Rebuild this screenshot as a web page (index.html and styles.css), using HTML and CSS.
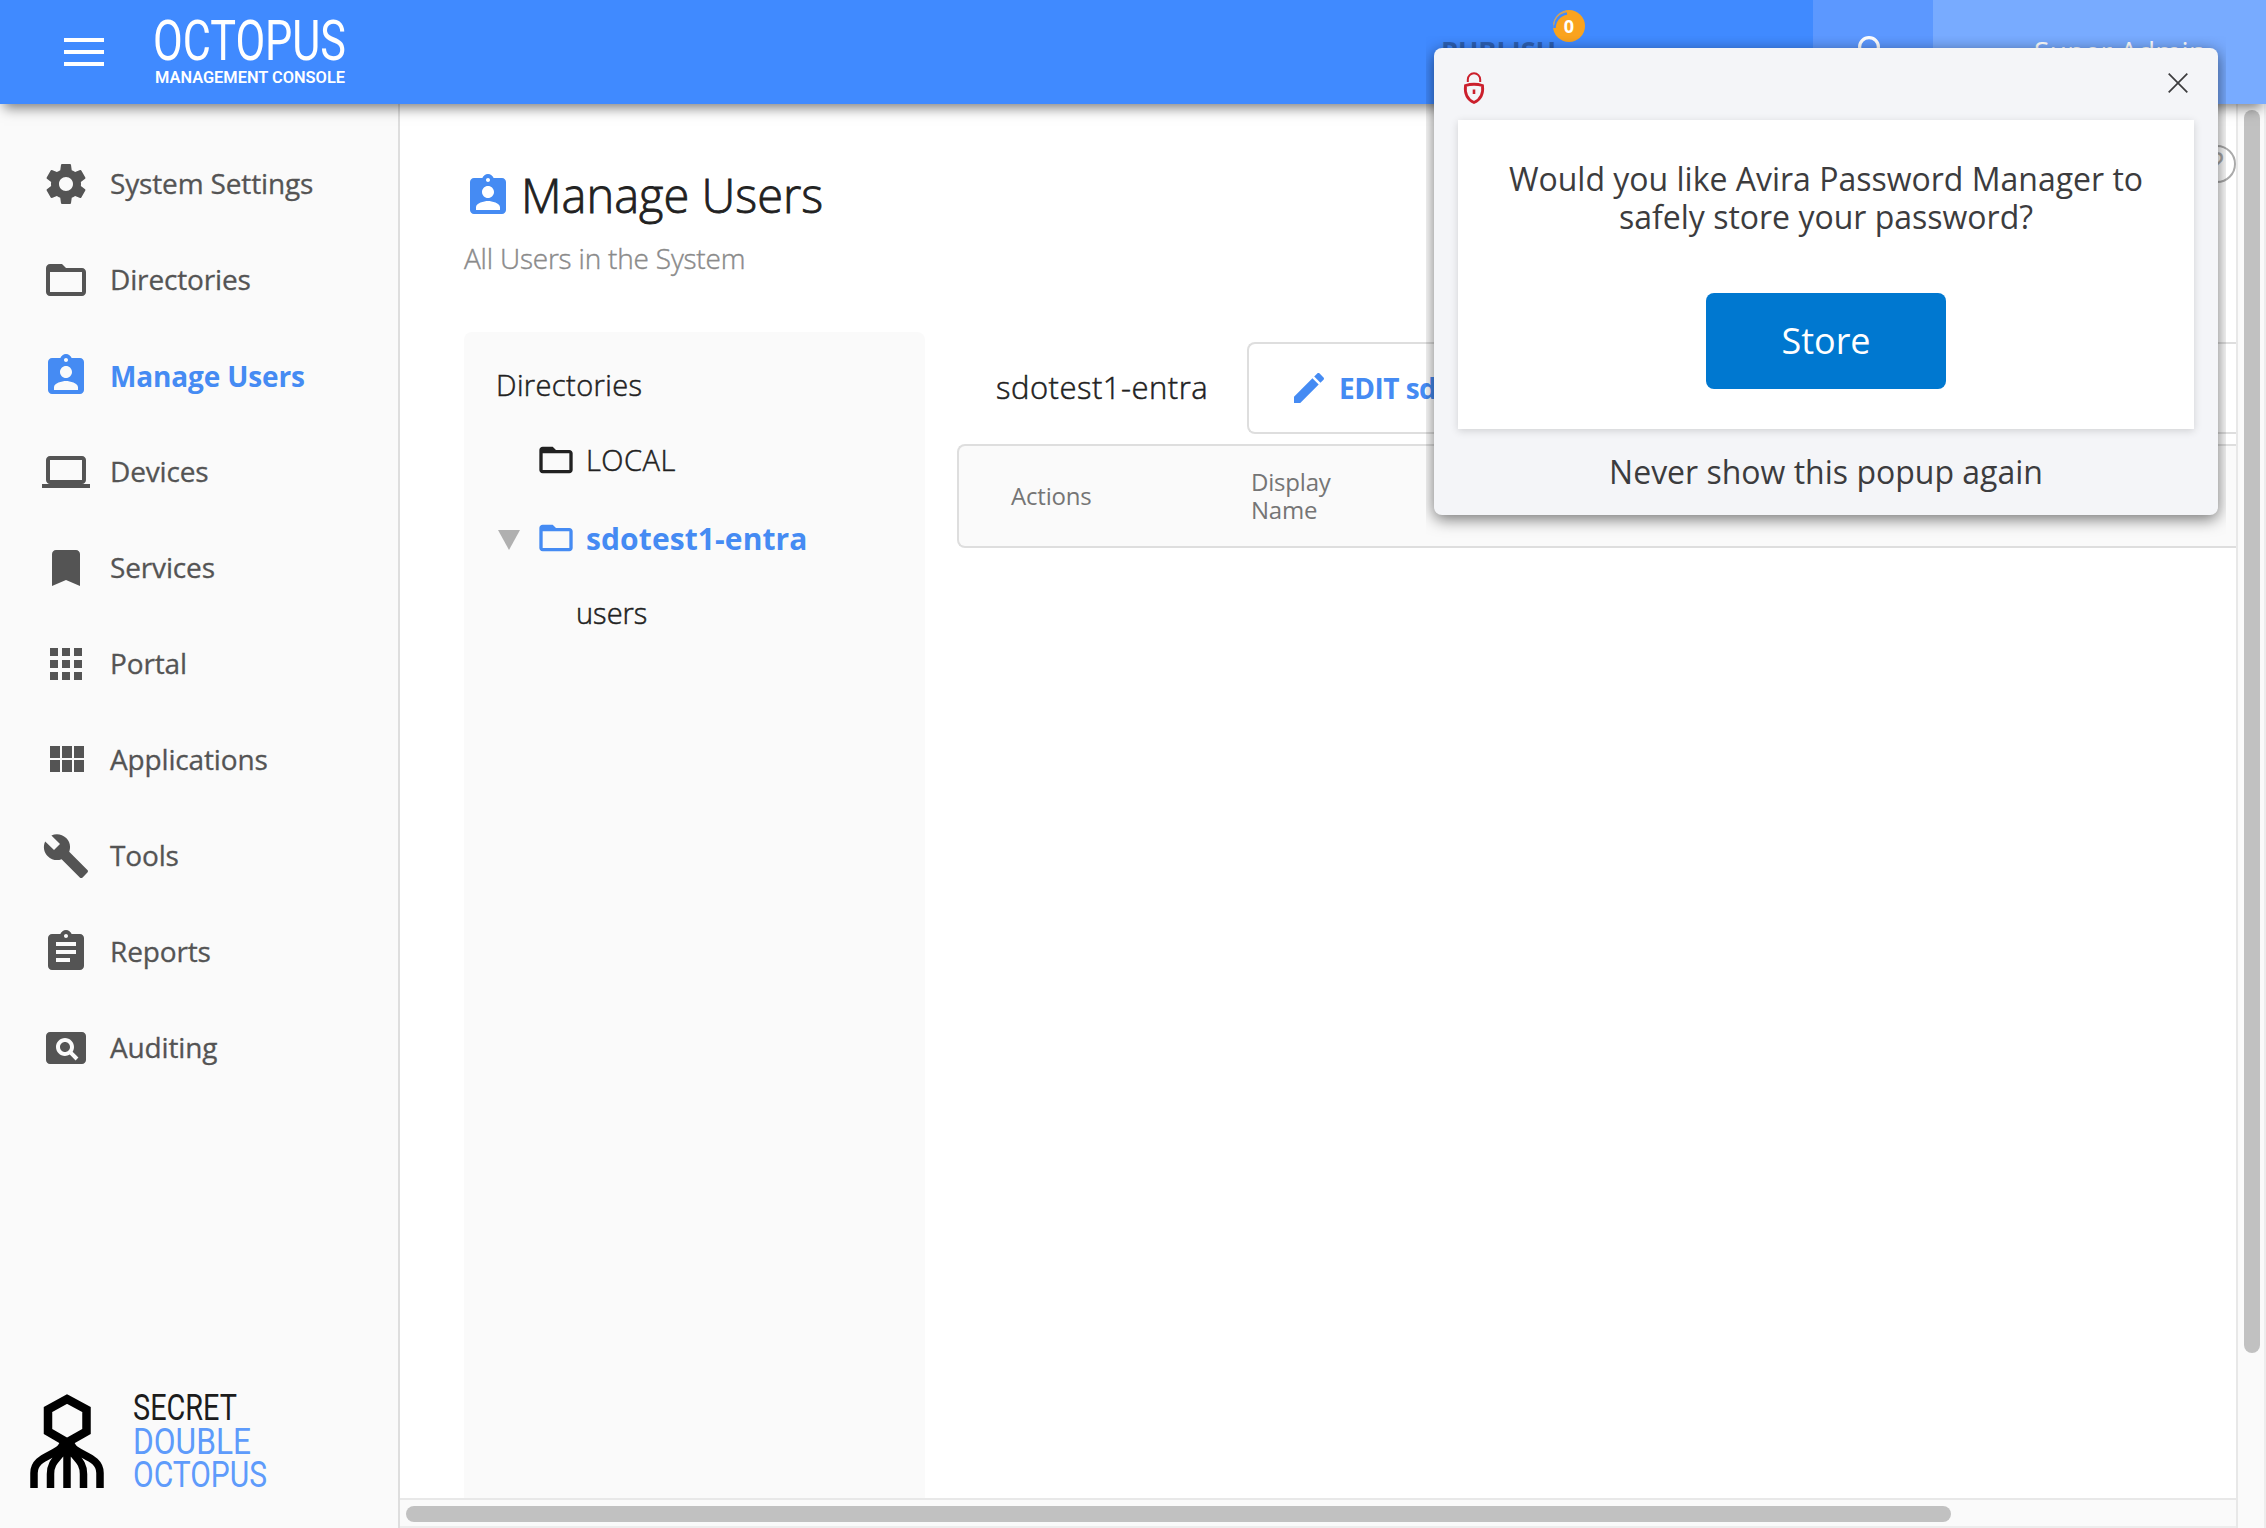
FILE: index.html
```html
<!DOCTYPE html>
<html lang="en">
<head>
    <meta charset="UTF-8">
    <meta name="viewport" content="width=device-width, initial-scale=1.0">
    <title>Octopus Management Console</title>
    <link rel="stylesheet" href="styles.css">
</head>
<body>
    <!-- Top bar -->
    <header class="topbar">
        <button class="menu-btn" aria-label="Menu"><span></span><span></span><span></span></button>
        <svg class="brand" width="190" height="72" viewBox="0 0 190 72">
            <text class="brand-name" x="-2" y="44" textLength="193" lengthAdjust="spacingAndGlyphs">OCTOPUS</text>
            <text class="brand-sub" x="0" y="66.500" textLength="190" lengthAdjust="spacingAndGlyphs">MANAGEMENT CONSOLE</text>
        </svg>
        <div class="publish">
            <span class="publish-label">PUBLISH</span>
            <span class="badge">0
                <svg class="badge-arc" viewBox="0 0 32 32"><path d="M1.5 18A14.5 14.5 0 0 1 14 3.5" fill="none" stroke="#408aff" stroke-width="2.6"/><path d="M.8 15A15 15 0 0 1 13 1.2" fill="none" stroke="#b3a184" stroke-width="1"/></svg>
            </span>
        </div>
        <div class="top-search">
            <svg width="48" height="48" viewBox="0 0 24 24"><circle cx="12" cy="8" r="4.7" fill="none" stroke="#fff" stroke-width="1.6"/><path d="M4 20c0-4 4-6 8-6s8 2 8 6z" fill="#fff"/></svg>
        </div>
        <div class="top-user">Super Admin</div>
    </header>

    <div class="layout">
        <!-- Sidebar -->
        <aside class="sidebar">
            <nav class="nav">
                <a class="nav-item">
                    <svg class="icon" viewBox="0 0 24 24"><path d="M19.43 12.98c.04-.32.07-.64.07-.98s-.03-.66-.07-.98l2.11-1.65c.19-.15.24-.42.12-.64l-2-3.46c-.12-.22-.39-.3-.61-.22l-2.49 1c-.52-.4-1.08-.73-1.69-.98l-.38-2.65C14.46 2.18 14.25 2 14 2h-4c-.25 0-.46.18-.49.42l-.38 2.65c-.61.25-1.17.59-1.69.98l-2.49-1c-.23-.09-.49 0-.61.22l-2 3.46c-.13.22-.07.49.12.64l2.11 1.65c-.04.32-.07.65-.07.98s.03.66.07.98l-2.11 1.65c-.19.15-.24.42-.12.64l2 3.46c.12.22.39.3.61.22l2.49-1c.52.4 1.08.73 1.69.98l.38 2.65c.03.24.24.42.49.42h4c.25 0 .46-.18.49-.42l.38-2.65c.61-.25 1.17-.59 1.69-.98l2.49 1c.23.09.49 0 .61-.22l2-3.46c.12-.22.07-.49-.12-.64l-2.11-1.65zM12 15.5c-1.93 0-3.5-1.57-3.5-3.5s1.57-3.5 3.5-3.5 3.5 1.57 3.5 3.5-1.57 3.5-3.5 3.5z"/></svg>
                    <span>System Settings</span>
                </a>
                <a class="nav-item">
                    <svg class="icon" viewBox="0 0 24 24"><path d="M20 6h-8l-2-2H4c-1.1 0-1.99.9-1.99 2L2 18c0 1.1.9 2 2 2h16c1.1 0 2-.9 2-2V8c0-1.1-.9-2-2-2zm0 12H4V8h16v10z"/></svg>
                    <span>Directories</span>
                </a>
                <a class="nav-item active">
                    <svg class="icon" viewBox="0 0 24 24"><path d="M19 3h-4.18C14.4 1.84 13.3 1 12 1c-1.3 0-2.4.84-2.82 2H5c-1.1 0-2 .9-2 2v14c0 1.1.9 2 2 2h14c1.1 0 2-.9 2-2V5c0-1.1-.9-2-2-2zm-7 0c.55 0 1 .45 1 1s-.45 1-1 1-1-.45-1-1 .45-1 1-1zm0 4c1.66 0 3 1.34 3 3s-1.34 3-3 3-3-1.34-3-3 1.34-3 3-3zm6 12H6v-1.4c0-2 4-3.1 6-3.1s6 1.1 6 3.1V19z"/></svg>
                    <span>Manage Users</span>
                </a>
                <a class="nav-item">
                    <svg class="icon" viewBox="0 0 24 24"><path d="M20 18c1.1 0 1.99-.9 1.99-2L22 6c0-1.1-.9-2-2-2H4c-1.1 0-2 .9-2 2v10c0 1.1.9 2 2 2H0v2h24v-2h-4zM4 6h16v10H4V6z"/></svg>
                    <span>Devices</span>
                </a>
                <a class="nav-item">
                    <svg class="icon" viewBox="0 0 24 24"><path d="M17 3H7c-1.1 0-1.99.9-1.99 2L5 21l7-3 7 3V5c0-1.1-.9-2-2-2z"/></svg>
                    <span>Services</span>
                </a>
                <a class="nav-item">
                    <svg class="icon" viewBox="0 0 24 24"><path d="M4 8h4V4H4v4zm6 12h4v-4h-4v4zm-6 0h4v-4H4v4zm0-6h4v-4H4v4zm6 0h4v-4h-4v4zm6-10v4h4V4h-4zm-6 4h4V4h-4v4zm6 6h4v-4h-4v4zm0 6h4v-4h-4v4z"/></svg>
                    <span>Portal</span>
                </a>
                <a class="nav-item">
                    <svg class="icon" viewBox="0 0 24 24"><path d="M4 11h5V5H4v6zm0 7h5v-6H4v6zm6 0h5v-6h-5v6zm6 0h5v-6h-5v6zm-6-7h5V5h-5v6zm6-6v6h5V5h-5z"/></svg>
                    <span>Applications</span>
                </a>
                <a class="nav-item">
                    <svg class="icon" viewBox="0 0 24 24"><path d="M22.7 19l-9.1-9.1c.9-2.3.4-5-1.5-6.9-2-2-5-2.4-7.4-1.3L9 6 6 9 1.6 4.7C.4 7.1.9 10.1 2.9 12.1c1.9 1.9 4.6 2.4 6.9 1.5l9.1 9.1c.4.4 1 .4 1.4 0l2.3-2.3c.5-.4.5-1.1.1-1.4z"/></svg>
                    <span>Tools</span>
                </a>
                <a class="nav-item">
                    <svg class="icon" viewBox="0 0 24 24"><path d="M19 3h-4.18C14.4 1.84 13.3 1 12 1c-1.3 0-2.4.84-2.82 2H5c-1.1 0-2 .9-2 2v14c0 1.1.9 2 2 2h14c1.1 0 2-.9 2-2V5c0-1.1-.9-2-2-2zm-7 0c.55 0 1 .45 1 1s-.45 1-1 1-1-.45-1-1 .45-1 1-1zm2 14H7v-2h7v2zm3-4H7v-2h10v2zm0-4H7V7h10v2z"/></svg>
                    <span>Reports</span>
                </a>
                <a class="nav-item">
                    <svg class="icon" viewBox="0 0 24 24"><path d="M11.5 9C10.12 9 9 10.12 9 11.5s1.12 2.5 2.5 2.5 2.5-1.12 2.5-2.5S12.88 9 11.5 9zM20 4H4c-1.1 0-2 .9-2 2v12c0 1.1.9 2 2 2h16c1.1 0 2-.9 2-2V6c0-1.1-.9-2-2-2zm-3.21 14.21l-2.91-2.91c-.69.44-1.51.7-2.39.7C9.01 16 7 13.99 7 11.5S9.01 7 11.5 7 16 9.01 16 11.5c0 .88-.26 1.69-.7 2.39l2.91 2.9-1.42 1.42z"/></svg>
                    <span>Auditing</span>
                </a>
            </nav>
            <div class="company">
                <svg class="company-logo" width="74" height="94" viewBox="0 0 74 94" fill="none" stroke="#000" stroke-width="8.500">
                    <path d="M37 5L56.500 15.500V37.500L37 48.500L18 37.500V15.500z"/>
                    <path d="M37 50V94M33 52C24 62 4 63 4 79V94M35 54C28 65 20.500 67 20.500 80V94M41 52C50 62 70 63 70 79V94M39 54C46 65 53.500 67 53.500 80V94" stroke-width="7.500"/>
                    <path d="M30 48h14l5 8-4 6H29l-4-6z" fill="#000" stroke="none"/>
                </svg>
                <svg class="company-name" width="134" height="96" viewBox="0 0 134 96">
                    <text x="0" y="26" textLength="104" lengthAdjust="spacingAndGlyphs" fill="#1c1c1c">SECRET</text>
                    <text x="0" y="59.500" textLength="118" lengthAdjust="spacingAndGlyphs">DOUBLE</text>
                    <text x="0" y="92.500" textLength="134" lengthAdjust="spacingAndGlyphs">OCTOPUS</text>
                </svg>
            </div>
        </aside>

        <!-- Page content -->
        <main class="content">
            <div class="viewport">
                <div class="page-head">
                    <div>
                        <h1 class="page-title">
                            <svg class="icon" viewBox="0 0 24 24"><path d="M19 3h-4.180C14.4 1.84 13.3 1 12 1c-1.3 0-2.4.84-2.82 2H5c-1.1 0-2 .9-2 2v14c0 1.1.9 2 2 2h14c1.1 0 2-.9 2-2V5c0-1.1-.9-2-2-2zm-7 0c.55 0 1 .45 1 1s-.45 1-1 1-1-.45-1-1 .45-1 1-1zm0 4c1.66 0 3 1.34 3 3s-1.34 3-3 3-3-1.34-3-3 1.34-3 3-3zm6 12H6v-1.4c0-2 4-3.1 6-3.1s6 1.1 6 3.1V19z"/></svg>
                            <span>Manage Users</span>
                        </h1>
                        <p class="page-subtitle">All Users in the System</p>
                    </div>
                    <div class="help">?</div>
                </div>

                <div class="columns">
                    <section class="tree">
                        <h2 class="tree-title">Directories</h2>
                        <div class="tree-row">
                            <svg class="icon" viewBox="0 0 24 24"><path d="M20 6h-8l-2-2H4c-1.1 0-1.99.9-1.99 2L2 18c0 1.1.9 2 2 2h16c1.1 0 2-.9 2-2V8c0-1.1-.9-2-2-2zm0 12H4V8h16v10z"/></svg>
                            <span>LOCAL</span>
                        </div>
                        <div class="tree-row selected">
                            <span class="caret"></span>
                            <svg class="icon" viewBox="0 0 24 24"><path d="M20 6h-8l-2-2H4c-1.1 0-1.99.9-1.99 2L2 18c0 1.1.9 2 2 2h16c1.1 0 2-.9 2-2V8c0-1.1-.9-2-2-2zm0 12H4V8h16v10z"/></svg>
                            <span>sdotest1-entra</span>
                        </div>
                        <div class="tree-row child"><span>users</span></div>
                    </section>

                    <section class="users">
                        <div class="toolbar">
                            <span class="toolbar-title">sdotest1-entra</span>
                            <button class="edit-btn">
                                <svg class="icon" viewBox="0 0 24 24"><path d="M3 17.250V21h3.750L17.810 9.940l-3.750-3.750L3 17.250zM20.710 7.040c.39-.39.39-1.020 0-1.410l-2.340-2.340c-.39-.39-1.020-.39-1.410 0l-1.830 1.830 3.750 3.750 1.830-1.830z"/></svg>
                                <span>EDIT sdotest1-entra</span>
                            </button>
                        </div>
                        <div class="table-head">
                            <span class="col-actions">Actions</span>
                            <span class="col-name">Display Name</span>
                        </div>
                    </section>
                </div>
            </div>
            <div class="scroll-v"><div class="thumb"></div></div>
            <div class="scroll-h"><div class="thumb"></div></div>
        </main>
    </div>

    <!-- Password manager popup -->
    <div class="popup">
        <div class="popup-head">
            <svg width="20" height="32" viewBox="0 0 20 32" fill="none" stroke="#cb1f2c">
                <path d="M3.800 10V7.500a6.200 6.200 0 0 1 12.400 0V10" stroke-width="2"/>
                <path d="M1.500 13.500Q10 11 18.500 13.500C19.500 22 17 27.500 10 30.500C3 27.500 .5 22 1.500 13.500z" stroke-width="2.800"/>
                <path d="M10 17.500v4.500" stroke-width="2.600"/>
            </svg>
            <svg class="popup-close" width="20" height="20" viewBox="0 0 20 20"><path d="M.7.7l18.600 18.600M19.300.7L.7 19.300" stroke="#3c3c3e" stroke-width="1.700"/></svg>
        </div>
        <div class="popup-card">
            <p class="popup-text">Would you like Avira Password Manager to<br>safely store your password?</p>
            <button class="store-btn">Store</button>
        </div>
        <a class="popup-never">Never show this popup again</a>
    </div>
</body>
</html>
```
FILE: styles.css
```css
* {
    margin: 0;
    padding: 0;
    box-sizing: border-box;
}

body {
    font-family: "Open Sans", "Noto Sans", sans-serif;
    width: 2266px;
    height: 1528px;
    overflow: hidden;
    display: flex;
    flex-direction: column;
    background: #fff;
    color: #212121;
}

button {
    font-family: inherit;
    border: none;
    background: none;
}

svg {
    overflow: visible;
}

.icon {
    width: 48px;
    height: 48px;
    fill: currentColor;
    flex-shrink: 0;
}

/* Top bar */
.topbar {
    position: relative;
    z-index: 2;
    height: 104px;
    flex-shrink: 0;
    display: flex;
    background: #408aff;
    box-shadow: 0 8px 12px -4px rgba(0, 0, 0, 0.5);
}

.menu-btn {
    width: 40px;
    margin: 38px 51px 38px 64px;
    display: flex;
    flex-direction: column;
    gap: 8px;
}

.menu-btn span {
    height: 4px;
    background: #fff;
}

.brand {
    margin-top: 16px;
    fill: #fff;
    font-family: Roboto, sans-serif;
}

.brand-name {
    font-size: 56px;
    font-weight: 400;
}

.brand-sub {
    font-size: 17px;
    font-weight: 600;
}

.publish {
    margin-left: auto;
    margin-right: 228px;
    padding-top: 31px;
    display: flex;
    position: relative;
}

.publish-label {
    width: 144px;
    font-size: 27px;
    line-height: 40px;
    font-weight: 700;
    color: #2c60b3;
}

.badge {
    position: absolute;
    right: 0;
    top: 10px;
    width: 32px;
    height: 32px;
    border-radius: 50%;
    background: #faa31e;
    color: #fff;
    font-size: 18px;
    font-weight: 700;
    line-height: 32px;
    text-align: center;
}

.badge-arc {
    position: absolute;
    left: 0;
    top: 0;
}

.top-search {
    width: 120px;
    background: #5c98ff;
    padding: 31px 32px;
}

.top-user {
    width: 333px;
    background: #78abff;
    color: #fff;
    padding: 29px 0 0 101px;
    font-size: 28px;
    line-height: 44px;
    letter-spacing: 0.3px;
}

/* Sidebar */
.layout {
    flex: 1;
    display: flex;
    min-height: 0;
}

.sidebar {
    width: 400px;
    flex-shrink: 0;
    padding: 32px 0 38px;
    background: #fafafa;
    border-right: 2px solid #dedede;
    display: flex;
    flex-direction: column;
    justify-content: space-between;
}

.nav-item {
    height: 96px;
    padding-left: 42px;
    display: flex;
    align-items: center;
    gap: 20px;
    font-size: 28px;
    letter-spacing: -0.15px;
    color: #545454;
}

.nav-item span {
    margin-bottom: 2px;
    -webkit-text-stroke: 0.3px currentColor;
}

.nav-item.active {
    color: #458bf3;
    font-weight: 700;
}

.nav-item.active span {
    margin-bottom: 0;
    -webkit-text-stroke: 0;
}

.company {
    padding-left: 30px;
    display: flex;
    align-items: flex-end;
    gap: 29px;
}

.company-logo {
    margin-bottom: 2px;
}

.company-name {
    font-family: Roboto, sans-serif;
    font-size: 37px;
    fill: #5e9bfb;
}

/* Content area with its scrollbars */
.content {
    flex: 1;
    min-width: 0;
    display: grid;
    grid-template-columns: 1fr 30px;
    grid-template-rows: 1fr 30px;
}

.viewport {
    min-width: 0;
    padding: 41px 0 0 64px;
    overflow: hidden;
    display: flex;
    flex-direction: column;
}

.scroll-v {
    grid-row: 1 / 3;
    grid-column: 2;
    background: #fafafa;
    border-left: 2px solid #e8e8e8;
    border-right: 2px solid #ededed;
    padding: 6px;
}

.scroll-v .thumb {
    width: 16px;
    height: 1243px;
    border-radius: 8px;
    background: #c1c1c1;
}

.scroll-h {
    grid-row: 2;
    grid-column: 1;
    background: #fafafa;
    border-top: 2px solid #e8e8e8;
    border-bottom: 2px solid #ededed;
    padding: 6px;
}

.scroll-h .thumb {
    width: 1545px;
    height: 16px;
    border-radius: 8px;
    background: #c1c1c1;
}

.page-head {
    height: 187px;
    flex-shrink: 0;
    display: flex;
    justify-content: space-between;
}

.page-title {
    display: flex;
    gap: 9px;
    height: 88px;
    align-items: center;
    font-size: 47px;
    font-weight: 300;
    -webkit-text-stroke: 0.8px currentColor;
}

.page-title .icon {
    color: #458bf3;
    margin-top: 14px;
}

.page-title span {
    margin-top: 12px;
}

.page-subtitle {
    font-size: 28px;
    line-height: 40px;
    margin-top: 5px;
    font-weight: 300;
    letter-spacing: -0.2px;
    color: #8a8a8a;
    -webkit-text-stroke: 0.4px currentColor;
}

.help {
    width: 38px;
    height: 38px;
    border: 2px solid #aaa;
    border-radius: 50%;
    color: #aaa;
    font-size: 32px;
    line-height: 34px;
    text-align: center;
}

.columns {
    flex: 1;
    display: flex;
    gap: 32px;
}

.tree {
    width: 461px;
    flex-shrink: 0;
    background: #fafafa;
    border-radius: 8px 8px 0 0;
    padding: 32px 0 0 32px;
    font-size: 29px;
    font-weight: 300;
    -webkit-text-stroke: 0.5px currentColor;
}

.tree-title {
    font-size: 29px;
    font-weight: 300;
    line-height: 42px;
    letter-spacing: 0.4px;
    margin-bottom: 15px;
}

.tree-row {
    height: 78px;
    padding-left: 40px;
    display: flex;
    align-items: center;
    gap: 10px;
    position: relative;
    letter-spacing: 0.5px;
}

.tree-row .icon {
    width: 40px;
    height: 40px;
}

.tree-row span {
    margin-bottom: 2px;
}

.tree-row.selected {
    color: #458bf3;
    font-size: 30px;
    font-weight: 700;
    letter-spacing: 0.1px;
    -webkit-text-stroke: 0;
}

.tree-row.selected span {
    margin-bottom: 0;
}

.tree-row.child {
    height: 72px;
    padding-left: 80px;
    letter-spacing: 0;
}

.caret {
    position: absolute;
    left: 2px;
    top: 31px;
    border: 11px solid transparent;
    border-top: 20px solid #b0b0b0;
    border-bottom: none;
}

.users {
    flex: 1;
    min-width: 0;
    padding-top: 10px;
}

.toolbar {
    display: flex;
    align-items: center;
    padding-left: 39px;
    margin-bottom: 10px;
}

.toolbar-title {
    width: 251px;
    margin-bottom: 2px;
    font-size: 31px;
    font-weight: 300;
    letter-spacing: 0.5px;
    -webkit-text-stroke: 0.5px currentColor;
}

.edit-btn {
    flex: 1;
    height: 92px;
    border: 2px solid #dedede;
    border-right: none;
    border-radius: 8px 0 0 8px;
    padding-left: 40px;
    display: flex;
    align-items: center;
    gap: 10px;
    font-size: 28px;
    font-weight: 700;
    letter-spacing: -0.5px;
    color: #458bf3;
}

.edit-btn .icon {
    width: 40px;
    height: 40px;
}

.edit-btn span {
    margin-bottom: 1px;
}

.table-head {
    height: 104px;
    background: #fafafa;
    border: 2px solid #dedede;
    border-right: none;
    border-radius: 8px 0 0 8px;
    display: flex;
    align-items: center;
    padding: 0 0 1px 52px;
    font-size: 24px;
    line-height: 28px;
    letter-spacing: -0.2px;
    color: #757575;
}

.col-actions {
    width: 240px;
}

.col-name {
    width: 120px;
}

/* Popup */
.popup {
    position: absolute;
    z-index: 5;
    left: 1434px;
    top: 48px;
    width: 784px;
    height: 467px;
    padding: 0 24px;
    background: #f4f5f8;
    border-radius: 8px;
    box-shadow: 0 4px 16px rgba(0, 0, 0, 0.55);
    clip-path: inset(-12px -8px -24px -8px);
    color: #3c3c3e;
    text-align: center;
}

.popup-head {
    height: 72px;
    padding: 24px 6px 0;
    display: flex;
    justify-content: space-between;
}

.popup-close {
    margin-top: 1px;
}

.popup-card {
    height: 309px;
    padding-top: 40px;
    background: #fff;
    box-shadow: 0 2px 8px rgba(0, 0, 0, 0.15);
}

.popup-text {
    font-size: 32px;
    line-height: 38px;
}

.store-btn {
    width: 240px;
    height: 96px;
    margin-top: 57px;
    padding-bottom: 2px;
    border-radius: 8px;
    background: #0078d0;
    color: #fff;
    font-size: 36px;
}

.popup-never {
    display: block;
    font-size: 32px;
    line-height: 86px;
}
```
